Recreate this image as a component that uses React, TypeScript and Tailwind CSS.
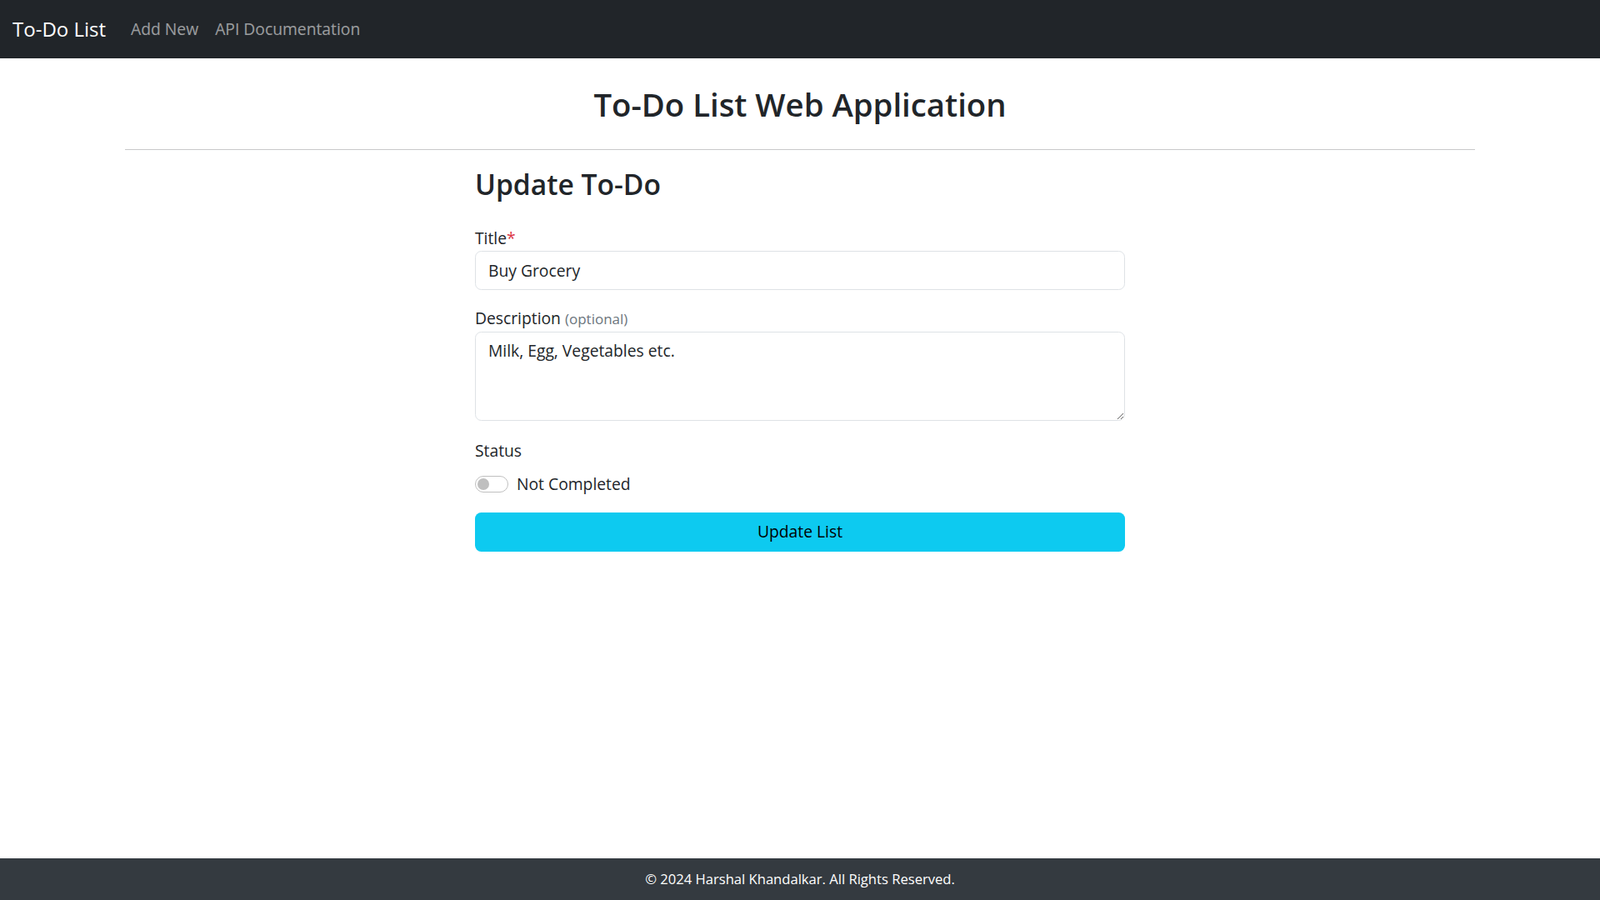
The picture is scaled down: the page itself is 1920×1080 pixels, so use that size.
import React, { useState } from 'react';

const App: React.FC = () => {
  const [title, setTitle] = useState('Buy Grocery');
  const [description, setDescription] = useState('Milk, Egg, Vegetables etc.');
  const [completed, setCompleted] = useState(false);

  return (
    <div className="min-h-screen flex flex-col bg-white text-[#212529] text-[19.3px] font-['Open_Sans',sans-serif]">
      <nav className="h-[70px] bg-[#212529] flex items-center px-[15px] shrink-0">
        <a href="#" className="text-white text-[24px] mr-[20px] leading-[1.5]">To-Do List</a>
        <a href="#" className="text-white/55 px-[10px] leading-[1.5]">Add New</a>
        <a href="#" className="text-white/55 px-[10px] leading-[1.5]">API Documentation</a>
      </nav>

      <main className="flex-1 w-[1620px] mx-auto">
        <h2 className="mt-[31px] text-center text-[38.3px] leading-[48px] font-semibold">
          To-Do List Web Application
        </h2>
        <hr className="mt-[30px] mb-[20px] border-t border-[#c8c9ca]" />

        <form className="w-[780px] mx-auto" onSubmit={(e) => e.preventDefault()}>
          <h3 className="text-[33.6px] leading-[42px] font-semibold">Update To-Do</h3>

          <div className="mt-[29px]">
            <label className="block leading-[30px]">
              Title<span className="text-[#dc3545]">*</span>
            </label>
            <input
              value={title}
              onChange={(e) => setTitle(e.target.value)}
              className="block w-full h-[47px] px-[15px] border border-[#dee2e6] rounded-[7.5px] outline-none"
            />
          </div>

          <div className="mt-[19px]">
            <label className="block leading-[30px]">
              Description <span className="text-[#6c757d] text-[17px]">(optional)</span>
            </label>
            <textarea
              value={description}
              onChange={(e) => setDescription(e.target.value)}
              className="block w-full h-[107px] px-[15px] py-[7px] leading-[30px] border border-[#dee2e6] rounded-[7.5px] outline-none"
            />
          </div>

          <div className="mt-[21px]">
            <p className="leading-[30px]">Status</p>
            <label className="mt-[10px] flex items-center h-[30px] cursor-pointer">
              <button
                type="button"
                onClick={() => setCompleted(!completed)}
                className={`relative w-[40px] h-[20px] rounded-full border ${completed ? 'bg-[#0d6efd] border-[#0d6efd]' : 'bg-white border-[#bfbfbf]'}`}
              >
                <span
                  className={`absolute top-[2px] w-[14px] h-[14px] rounded-full ${completed ? 'left-[22px] bg-white' : 'left-[2px] bg-[#bfbfbf]'}`}
                />
              </button>
              <span className="ml-[10px]">{completed ? 'Completed' : 'Not Completed'}</span>
            </label>
          </div>

          <button
            type="submit"
            className="mt-[19px] w-full h-[47px] bg-[#0dcaf0] text-black rounded-[7.5px]"
          >
            Update List
          </button>
        </form>
      </main>

      <footer className="h-[50px] bg-[#343a40] text-white flex items-center justify-center text-[16.6px] shrink-0">
        © 2024 Harshal Khandalkar. All Rights Reserved.
      </footer>
    </div>
  );
};

export default App;
